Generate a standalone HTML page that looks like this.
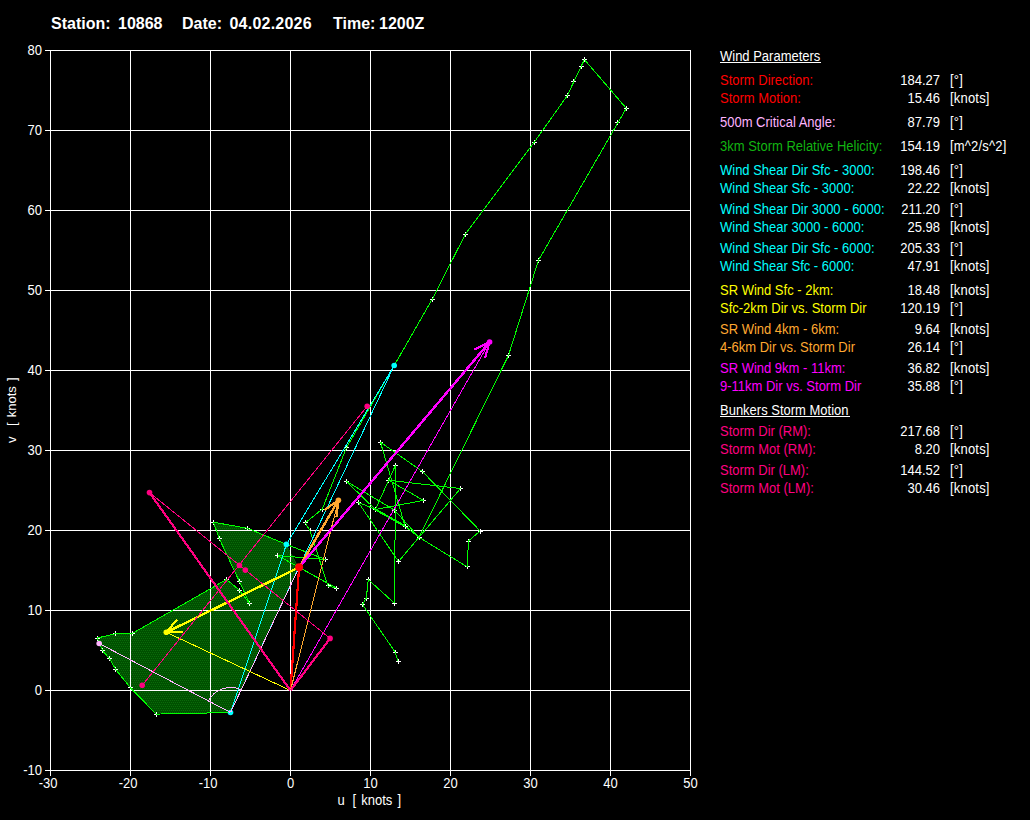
<!DOCTYPE html>
<html><head><meta charset="utf-8"><style>
html,body{margin:0;padding:0;background:#000;width:1030px;height:820px;overflow:hidden}
body{position:relative}
</style></head><body>
<svg width="1030" height="820" viewBox="0 0 1030 820" style="position:absolute;left:0;top:0">
<defs><pattern id="hp" width="2" height="4" patternUnits="userSpaceOnUse"><rect width="2" height="4" fill="#005000"/><rect x="0" y="0" width="1" height="1" fill="#0a6a0a"/><rect x="1" y="2" width="1" height="1" fill="#0a6a0a"/></pattern></defs>
<polygon points="230.5,712.5 156.2,714.1 130.5,687.8 115.8,669.7 109.4,658.5 102.6,650.7 97.3,638.0 115.2,633.8 132.8,633.2 226.5,579.5 239.4,590.2 249.6,603.4 239.4,581.5 219.3,538.7 213.4,522.2 247.6,528.3 286.4,544.4 299.1,567.3" fill="url(#hp)" fill-rule="evenodd" stroke="none" shape-rendering="crispEdges"/>
<path d="M50.5 50V775.5 M130.5 50V775.5 M210.5 50V775.5 M290.5 50V775.5 M370.5 50V775.5 M450.5 50V775.5 M530.5 50V775.5 M610.5 50V775.5 M690.5 50V775.5 M45 50.5H691 M45 130.5H691 M45 210.5H691 M45 290.5H691 M45 370.5H691 M45 450.5H691 M45 530.5H691 M45 610.5H691 M45 690.5H691 M45 770.5H691" stroke="#fff" stroke-width="1" fill="none" shape-rendering="crispEdges"/>
<path d="M154.0 714.5h5M156.5 712.0v5 M128.0 687.5h5M130.5 685.0v5 M113.0 669.5h5M115.5 667.0v5 M107.0 658.5h5M109.5 656.0v5 M100.0 650.5h5M102.5 648.0v5 M95.0 638.5h5M97.5 636.0v5 M113.0 633.5h5M115.5 631.0v5 M130.0 633.5h5M132.5 631.0v5 M224.0 579.5h5M226.5 577.0v5 M237.0 590.5h5M239.5 588.0v5 M247.0 603.5h5M249.5 601.0v5 M237.0 581.5h5M239.5 579.0v5 M217.0 538.5h5M219.5 536.0v5 M211.0 522.5h5M213.5 520.0v5 M245.0 528.5h5M247.5 526.0v5 M323.0 559.5h5M325.5 557.0v5 M275.0 555.5h5M277.5 553.0v5 M334.0 588.5h5M336.5 586.0v5 M326.0 585.5h5M328.5 583.0v5 M308.0 530.5h5M310.5 528.0v5 M303.0 522.5h5M305.5 520.0v5 M320.0 509.5h5M322.5 507.0v5 M344.0 447.5h5M346.5 445.0v5 M430.0 299.5h5M432.5 297.0v5 M463.0 234.5h5M465.5 232.0v5 M532.0 142.5h5M534.5 140.0v5 M565.0 95.5h5M567.5 93.0v5 M571.0 81.5h5M573.5 79.0v5 M579.0 66.5h5M581.5 64.0v5 M582.0 59.5h5M584.5 57.0v5 M624.0 108.5h5M626.5 106.0v5 M615.0 122.5h5M617.5 120.0v5 M536.0 260.5h5M538.5 258.0v5 M506.0 355.5h5M508.5 353.0v5 M417.0 537.5h5M419.5 535.0v5 M392.0 510.5h5M394.5 508.0v5 M403.0 526.5h5M405.5 524.0v5 M465.0 566.5h5M467.5 564.0v5 M396.0 561.5h5M398.5 559.0v5 M458.0 488.5h5M460.5 486.0v5 M466.0 541.5h5M468.5 539.0v5 M478.0 531.5h5M480.5 529.0v5 M420.0 471.5h5M422.5 469.0v5 M378.0 442.5h5M380.5 440.0v5 M356.0 502.5h5M358.5 500.0v5 M344.0 481.5h5M346.5 479.0v5 M373.0 509.5h5M375.5 507.0v5 M386.0 480.5h5M388.5 478.0v5 M421.0 500.5h5M423.5 498.0v5 M393.0 465.5h5M395.5 463.0v5 M392.0 603.5h5M394.5 601.0v5 M366.0 579.5h5M368.5 577.0v5 M364.0 598.5h5M366.5 596.0v5 M360.0 604.5h5M362.5 602.0v5 M393.0 652.5h5M395.5 650.0v5 M396.0 661.5h5M398.5 659.0v5" stroke="#fff" stroke-width="1" fill="none" shape-rendering="crispEdges"/>
<polyline points="230.5,712.5 156.2,714.1 130.5,687.8 115.8,669.7 109.4,658.5 102.6,650.7 97.3,638.0 115.2,633.8 132.8,633.2 226.5,579.5 239.4,590.2 249.6,603.4 239.4,581.5 219.3,538.7 213.4,522.2 247.6,528.3 286.4,544.4 286.4,544.4 325.6,559.5 277.8,555.6 336.8,588.3 328.0,585.9 310.0,530.7 305.1,522.9 322.2,509.2 346.4,447.8 394.2,365.5 432.2,299.3 465.4,234.1 534.1,142.4 567.3,95.6 573.9,81.5 581.2,66.3 584.4,59.5 626.3,108.3 617.8,122.9 538.5,260.2 508.5,355.4 419.0,537.3" fill="none" stroke="#00FF00" stroke-width="1" shape-rendering="crispEdges"/>
<line x1="394.9" y1="510.5" x2="419.0" y2="537.3" stroke="#00FF00" stroke-width="1" shape-rendering="crispEdges"/>
<line x1="405.1" y1="526.2" x2="419.0" y2="537.3" stroke="#00FF00" stroke-width="1" shape-rendering="crispEdges"/>
<line x1="419.0" y1="537.3" x2="467.3" y2="566.9" stroke="#00FF00" stroke-width="1" shape-rendering="crispEdges"/>
<line x1="398.5" y1="561.5" x2="419.0" y2="537.3" stroke="#00FF00" stroke-width="1" shape-rendering="crispEdges"/>
<line x1="419.0" y1="537.3" x2="460.5" y2="488.5" stroke="#00FF00" stroke-width="1" shape-rendering="crispEdges"/>
<line x1="467.3" y1="566.9" x2="468.4" y2="541.0" stroke="#00FF00" stroke-width="1" shape-rendering="crispEdges"/>
<line x1="468.4" y1="541.0" x2="480.2" y2="531.0" stroke="#00FF00" stroke-width="1" shape-rendering="crispEdges"/>
<line x1="480.2" y1="531.0" x2="422.4" y2="471.5" stroke="#00FF00" stroke-width="1" shape-rendering="crispEdges"/>
<line x1="422.4" y1="471.5" x2="380.5" y2="442.3" stroke="#00FF00" stroke-width="1" shape-rendering="crispEdges"/>
<line x1="380.5" y1="442.3" x2="405.1" y2="526.2" stroke="#00FF00" stroke-width="1" shape-rendering="crispEdges"/>
<line x1="358.3" y1="502.3" x2="375.4" y2="509.5" stroke="#00FF00" stroke-width="1" shape-rendering="crispEdges"/>
<line x1="375.4" y1="509.5" x2="405.1" y2="526.2" stroke="#00FF00" stroke-width="2" shape-rendering="crispEdges"/>
<line x1="358.3" y1="502.3" x2="398.5" y2="561.5" stroke="#00FF00" stroke-width="1" shape-rendering="crispEdges"/>
<line x1="346.4" y1="481.4" x2="375.4" y2="509.5" stroke="#00FF00" stroke-width="1" shape-rendering="crispEdges"/>
<line x1="346.4" y1="481.4" x2="394.9" y2="510.5" stroke="#00FF00" stroke-width="1" shape-rendering="crispEdges"/>
<line x1="375.4" y1="509.5" x2="388.7" y2="480.3" stroke="#00FF00" stroke-width="1" shape-rendering="crispEdges"/>
<line x1="375.4" y1="509.5" x2="423.5" y2="500.4" stroke="#00FF00" stroke-width="1" shape-rendering="crispEdges"/>
<line x1="388.7" y1="480.3" x2="423.5" y2="500.4" stroke="#00FF00" stroke-width="1" shape-rendering="crispEdges"/>
<line x1="388.7" y1="480.3" x2="460.5" y2="488.5" stroke="#00FF00" stroke-width="1" shape-rendering="crispEdges"/>
<line x1="388.7" y1="480.3" x2="395.5" y2="465.3" stroke="#00FF00" stroke-width="1" shape-rendering="crispEdges"/>
<line x1="395.5" y1="465.3" x2="394.6" y2="603.4" stroke="#00FF00" stroke-width="1" shape-rendering="crispEdges"/>
<polyline points="394.6,603.4 368.3,579.6 366.3,598.0 362.4,604.4 395.2,652.2 398.1,661.4" fill="none" stroke="#00FF00" stroke-width="1" shape-rendering="crispEdges"/>
<line x1="230.5" y1="712.5" x2="286.4" y2="544.4" stroke="#00FFFF" stroke-width="1" shape-rendering="crispEdges"/>
<line x1="286.4" y1="544.4" x2="394.2" y2="365.5" stroke="#00FFFF" stroke-width="1" shape-rendering="crispEdges"/>
<line x1="230.5" y1="712.5" x2="394.2" y2="365.5" stroke="#00FFFF" stroke-width="1" shape-rendering="crispEdges"/>
<circle cx="230.5" cy="712.5" r="2.8" fill="#00FFFF"/>
<circle cx="286.4" cy="544.4" r="2.8" fill="#00FFFF"/>
<circle cx="394.2" cy="365.5" r="2.8" fill="#00FFFF"/>
<line x1="99.2" y1="643.5" x2="230.5" y2="712.5" stroke="#FFB4FF" stroke-width="1" shape-rendering="crispEdges"/>
<line x1="230.5" y1="712.5" x2="299.1" y2="567.3" stroke="#FFB4FF" stroke-width="1" shape-rendering="crispEdges"/>
<path d="M208.4 700.9 A25 25 0 0 1 241.2 689.9" stroke="#FFB4FF" fill="none" shape-rendering="crispEdges"/>
<circle cx="99.2" cy="643.5" r="2.8" fill="#FFB4FF"/>
<line x1="290.5" y1="690.5" x2="299.1" y2="567.3" stroke="#FF0000" stroke-width="2.2" shape-rendering="crispEdges"/>
<line x1="290.5" y1="690.5" x2="166.3" y2="632.3" stroke="#FFFF00" stroke-width="1" shape-rendering="crispEdges"/>
<line x1="290.5" y1="690.5" x2="338.4" y2="500.2" stroke="#FFA830" stroke-width="1" shape-rendering="crispEdges"/>
<line x1="290.5" y1="690.5" x2="489.6" y2="342.0" stroke="#FF00FF" stroke-width="1" shape-rendering="crispEdges"/>
<line x1="299.1" y1="567.3" x2="166.3" y2="632.3" stroke="#FFFF00" stroke-width="2.4" shape-rendering="crispEdges"/><line x1="166.3" y1="632.3" x2="183.3" y2="631.7" stroke="#FFFF00" stroke-width="2.2" shape-rendering="crispEdges"/><line x1="166.3" y1="632.3" x2="177.2" y2="619.3" stroke="#FFFF00" stroke-width="2.2" shape-rendering="crispEdges"/><circle cx="166.3" cy="632.3" r="2.8" fill="#FFFF00"/>
<line x1="299.1" y1="567.3" x2="338.4" y2="500.2" stroke="#FFA830" stroke-width="2.4" shape-rendering="crispEdges"/><line x1="338.4" y1="500.2" x2="324.6" y2="510.1" stroke="#FFA830" stroke-width="2.2" shape-rendering="crispEdges"/><line x1="338.4" y1="500.2" x2="336.5" y2="517.1" stroke="#FFA830" stroke-width="2.2" shape-rendering="crispEdges"/><circle cx="338.4" cy="500.2" r="2.8" fill="#FFA830"/>
<line x1="299.1" y1="567.3" x2="489.6" y2="342.0" stroke="#FF00FF" stroke-width="2.4" shape-rendering="crispEdges"/><line x1="489.6" y1="342.0" x2="474.3" y2="349.4" stroke="#FF00FF" stroke-width="2.2" shape-rendering="crispEdges"/><line x1="489.6" y1="342.0" x2="484.9" y2="358.3" stroke="#FF00FF" stroke-width="2.2" shape-rendering="crispEdges"/><circle cx="489.6" cy="342.0" r="2.8" fill="#FF00FF"/>
<line x1="149.5" y1="492.6" x2="290.5" y2="690.5" stroke="#FF0080" stroke-width="2.2" shape-rendering="crispEdges"/>
<line x1="290.5" y1="690.5" x2="330.1" y2="638.4" stroke="#FF0080" stroke-width="2.2" shape-rendering="crispEdges"/>
<line x1="142.2" y1="685.3" x2="367.2" y2="406.2" stroke="#FF0080" stroke-width="1" shape-rendering="crispEdges"/>
<line x1="149.5" y1="492.6" x2="330.1" y2="638.4" stroke="#FF0080" stroke-width="1" shape-rendering="crispEdges"/>
<circle cx="149.5" cy="492.6" r="2.8" fill="#FF0080"/>
<circle cx="330.1" cy="638.4" r="2.8" fill="#FF0080"/>
<circle cx="142.2" cy="685.3" r="2.8" fill="#FF0080"/>
<circle cx="239.4" cy="565.3" r="2.8" fill="#FF0080"/>
<circle cx="367.2" cy="406.2" r="2.8" fill="#FF0080"/>
<circle cx="245.3" cy="570.1" r="2.8" fill="#FF0080"/>
<circle cx="299.1" cy="567.3" r="4" fill="#FF0000"/>
<text transform="translate(0,788) scale(1,1.07)" x="48.1" y="0" font-family="Liberation Sans" font-size="13" fill="#fff" text-anchor="middle">-30</text>
<text transform="translate(0,788) scale(1,1.07)" x="128.1" y="0" font-family="Liberation Sans" font-size="13" fill="#fff" text-anchor="middle">-20</text>
<text transform="translate(0,788) scale(1,1.07)" x="208.1" y="0" font-family="Liberation Sans" font-size="13" fill="#fff" text-anchor="middle">-10</text>
<text transform="translate(0,788) scale(1,1.07)" x="290.5" y="0" font-family="Liberation Sans" font-size="13" fill="#fff" text-anchor="middle">0</text>
<text transform="translate(0,788) scale(1,1.07)" x="370.5" y="0" font-family="Liberation Sans" font-size="13" fill="#fff" text-anchor="middle">10</text>
<text transform="translate(0,788) scale(1,1.07)" x="450.5" y="0" font-family="Liberation Sans" font-size="13" fill="#fff" text-anchor="middle">20</text>
<text transform="translate(0,788) scale(1,1.07)" x="530.5" y="0" font-family="Liberation Sans" font-size="13" fill="#fff" text-anchor="middle">30</text>
<text transform="translate(0,788) scale(1,1.07)" x="610.5" y="0" font-family="Liberation Sans" font-size="13" fill="#fff" text-anchor="middle">40</text>
<text transform="translate(0,788) scale(1,1.07)" x="690.5" y="0" font-family="Liberation Sans" font-size="13" fill="#fff" text-anchor="middle">50</text>
<text transform="translate(0,55) scale(1,1.07)" x="42" y="0" font-family="Liberation Sans" font-size="13" fill="#fff" text-anchor="end">80</text>
<text transform="translate(0,135) scale(1,1.07)" x="42" y="0" font-family="Liberation Sans" font-size="13" fill="#fff" text-anchor="end">70</text>
<text transform="translate(0,215) scale(1,1.07)" x="42" y="0" font-family="Liberation Sans" font-size="13" fill="#fff" text-anchor="end">60</text>
<text transform="translate(0,295) scale(1,1.07)" x="42" y="0" font-family="Liberation Sans" font-size="13" fill="#fff" text-anchor="end">50</text>
<text transform="translate(0,375) scale(1,1.07)" x="42" y="0" font-family="Liberation Sans" font-size="13" fill="#fff" text-anchor="end">40</text>
<text transform="translate(0,455) scale(1,1.07)" x="42" y="0" font-family="Liberation Sans" font-size="13" fill="#fff" text-anchor="end">30</text>
<text transform="translate(0,535) scale(1,1.07)" x="42" y="0" font-family="Liberation Sans" font-size="13" fill="#fff" text-anchor="end">20</text>
<text transform="translate(0,615) scale(1,1.07)" x="42" y="0" font-family="Liberation Sans" font-size="13" fill="#fff" text-anchor="end">10</text>
<text transform="translate(0,695) scale(1,1.07)" x="42" y="0" font-family="Liberation Sans" font-size="13" fill="#fff" text-anchor="end">0</text>
<text transform="translate(0,775) scale(1,1.07)" x="42" y="0" font-family="Liberation Sans" font-size="13" fill="#fff" text-anchor="end">-10</text>
<g transform="translate(0,805) scale(1,1.07)"><text x="337.6" y="0" font-family="Liberation Sans" font-size="13" fill="#fff">u</text>
<text x="352.6" y="0" font-family="Liberation Sans" font-size="13" fill="#fff" word-spacing="1.5" xml:space="preserve">[ knots ]</text></g>
<text transform="translate(16,410.2) rotate(-90)" font-family="Liberation Sans" font-size="13" fill="#fff" text-anchor="middle" word-spacing="1.6" xml:space="preserve">v  [ knots ]</text>
<text x="51" y="29" font-family="Liberation Sans" font-weight="bold" font-size="16" fill="#fff"  letter-spacing="0">Station:</text>
<text x="118" y="29" font-family="Liberation Sans" font-weight="bold" font-size="16" fill="#fff"  letter-spacing="0">10868</text>
<text x="182" y="29" font-family="Liberation Sans" font-weight="bold" font-size="16" fill="#fff"  letter-spacing="0">Date:</text>
<text x="229.5" y="29" font-family="Liberation Sans" font-weight="bold" font-size="16" fill="#fff"  letter-spacing="0.22">04.02.2026</text>
<text x="333" y="29" font-family="Liberation Sans" font-weight="bold" font-size="16" fill="#fff"  letter-spacing="0">Time:</text>
<text x="379" y="29" font-family="Liberation Sans" font-weight="bold" font-size="16" fill="#fff"  letter-spacing="0">1200Z</text>
<rect x="720" y="62" width="101" height="1" fill="#fff"/>
<g transform="translate(0,61) scale(1,1.07)">
<text x="720" y="0" font-family="Liberation Sans" font-size="13" fill="#fff">Wind Parameters</text>
</g>
<g transform="translate(0,85) scale(1,1.07)">
<text x="720" y="0" font-family="Liberation Sans" font-size="13" fill="#FF0000">Storm Direction:</text>
<text x="940" y="0" font-family="Liberation Sans" font-size="13" fill="#fff" text-anchor="end">184.27</text>
<text x="950" y="0" font-family="Liberation Sans" font-size="13" fill="#fff" letter-spacing="0.2">[°]</text>
</g>
<g transform="translate(0,103) scale(1,1.07)">
<text x="720" y="0" font-family="Liberation Sans" font-size="13" fill="#FF0000">Storm Motion:</text>
<text x="940" y="0" font-family="Liberation Sans" font-size="13" fill="#fff" text-anchor="end">15.46</text>
<text x="950" y="0" font-family="Liberation Sans" font-size="13" fill="#fff" letter-spacing="0.2">[knots]</text>
</g>
<g transform="translate(0,127) scale(1,1.07)">
<text x="720" y="0" font-family="Liberation Sans" font-size="13" fill="#FFB4FF">500m Critical Angle:</text>
<text x="940" y="0" font-family="Liberation Sans" font-size="13" fill="#fff" text-anchor="end">87.79</text>
<text x="950" y="0" font-family="Liberation Sans" font-size="13" fill="#fff" letter-spacing="0.2">[°]</text>
</g>
<g transform="translate(0,151) scale(1,1.07)">
<text x="720" y="0" font-family="Liberation Sans" font-size="13" fill="#12B412">3km Storm Relative Helicity:</text>
<text x="940" y="0" font-family="Liberation Sans" font-size="13" fill="#fff" text-anchor="end">154.19</text>
<text x="950" y="0" font-family="Liberation Sans" font-size="13" fill="#fff" letter-spacing="0.2">[m^2/s^2]</text>
</g>
<g transform="translate(0,175) scale(1,1.07)">
<text x="720" y="0" font-family="Liberation Sans" font-size="13" fill="#00FFFF">Wind Shear Dir Sfc - 3000:</text>
<text x="940" y="0" font-family="Liberation Sans" font-size="13" fill="#fff" text-anchor="end">198.46</text>
<text x="950" y="0" font-family="Liberation Sans" font-size="13" fill="#fff" letter-spacing="0.2">[°]</text>
</g>
<g transform="translate(0,193) scale(1,1.07)">
<text x="720" y="0" font-family="Liberation Sans" font-size="13" fill="#00FFFF">Wind Shear Sfc - 3000:</text>
<text x="940" y="0" font-family="Liberation Sans" font-size="13" fill="#fff" text-anchor="end">22.22</text>
<text x="950" y="0" font-family="Liberation Sans" font-size="13" fill="#fff" letter-spacing="0.2">[knots]</text>
</g>
<g transform="translate(0,214) scale(1,1.07)">
<text x="720" y="0" font-family="Liberation Sans" font-size="13" fill="#00FFFF">Wind Shear Dir 3000 - 6000:</text>
<text x="940" y="0" font-family="Liberation Sans" font-size="13" fill="#fff" text-anchor="end">211.20</text>
<text x="950" y="0" font-family="Liberation Sans" font-size="13" fill="#fff" letter-spacing="0.2">[°]</text>
</g>
<g transform="translate(0,232) scale(1,1.07)">
<text x="720" y="0" font-family="Liberation Sans" font-size="13" fill="#00FFFF">Wind Shear 3000 - 6000:</text>
<text x="940" y="0" font-family="Liberation Sans" font-size="13" fill="#fff" text-anchor="end">25.98</text>
<text x="950" y="0" font-family="Liberation Sans" font-size="13" fill="#fff" letter-spacing="0.2">[knots]</text>
</g>
<g transform="translate(0,253) scale(1,1.07)">
<text x="720" y="0" font-family="Liberation Sans" font-size="13" fill="#00FFFF">Wind Shear Dir Sfc - 6000:</text>
<text x="940" y="0" font-family="Liberation Sans" font-size="13" fill="#fff" text-anchor="end">205.33</text>
<text x="950" y="0" font-family="Liberation Sans" font-size="13" fill="#fff" letter-spacing="0.2">[°]</text>
</g>
<g transform="translate(0,271) scale(1,1.07)">
<text x="720" y="0" font-family="Liberation Sans" font-size="13" fill="#00FFFF">Wind Shear Sfc - 6000:</text>
<text x="940" y="0" font-family="Liberation Sans" font-size="13" fill="#fff" text-anchor="end">47.91</text>
<text x="950" y="0" font-family="Liberation Sans" font-size="13" fill="#fff" letter-spacing="0.2">[knots]</text>
</g>
<g transform="translate(0,295) scale(1,1.07)">
<text x="720" y="0" font-family="Liberation Sans" font-size="13" fill="#FFFF00">SR Wind Sfc - 2km:</text>
<text x="940" y="0" font-family="Liberation Sans" font-size="13" fill="#fff" text-anchor="end">18.48</text>
<text x="950" y="0" font-family="Liberation Sans" font-size="13" fill="#fff" letter-spacing="0.2">[knots]</text>
</g>
<g transform="translate(0,313) scale(1,1.07)">
<text x="720" y="0" font-family="Liberation Sans" font-size="13" fill="#FFFF00">Sfc-2km Dir vs. Storm Dir</text>
<text x="940" y="0" font-family="Liberation Sans" font-size="13" fill="#fff" text-anchor="end">120.19</text>
<text x="950" y="0" font-family="Liberation Sans" font-size="13" fill="#fff" letter-spacing="0.2">[°]</text>
</g>
<g transform="translate(0,334) scale(1,1.07)">
<text x="720" y="0" font-family="Liberation Sans" font-size="13" fill="#FFA830">SR Wind 4km - 6km:</text>
<text x="940" y="0" font-family="Liberation Sans" font-size="13" fill="#fff" text-anchor="end">9.64</text>
<text x="950" y="0" font-family="Liberation Sans" font-size="13" fill="#fff" letter-spacing="0.2">[knots]</text>
</g>
<g transform="translate(0,352) scale(1,1.07)">
<text x="720" y="0" font-family="Liberation Sans" font-size="13" fill="#FFA830">4-6km Dir vs. Storm Dir</text>
<text x="940" y="0" font-family="Liberation Sans" font-size="13" fill="#fff" text-anchor="end">26.14</text>
<text x="950" y="0" font-family="Liberation Sans" font-size="13" fill="#fff" letter-spacing="0.2">[°]</text>
</g>
<g transform="translate(0,373) scale(1,1.07)">
<text x="720" y="0" font-family="Liberation Sans" font-size="13" fill="#FF00FF">SR Wind 9km - 11km:</text>
<text x="940" y="0" font-family="Liberation Sans" font-size="13" fill="#fff" text-anchor="end">36.82</text>
<text x="950" y="0" font-family="Liberation Sans" font-size="13" fill="#fff" letter-spacing="0.2">[knots]</text>
</g>
<g transform="translate(0,391) scale(1,1.07)">
<text x="720" y="0" font-family="Liberation Sans" font-size="13" fill="#FF00FF">9-11km Dir vs. Storm Dir</text>
<text x="940" y="0" font-family="Liberation Sans" font-size="13" fill="#fff" text-anchor="end">35.88</text>
<text x="950" y="0" font-family="Liberation Sans" font-size="13" fill="#fff" letter-spacing="0.2">[°]</text>
</g>
<rect x="720" y="416" width="130" height="1" fill="#fff"/>
<g transform="translate(0,415) scale(1,1.07)">
<text x="720" y="0" font-family="Liberation Sans" font-size="13" fill="#fff">Bunkers Storm Motion</text>
</g>
<g transform="translate(0,436) scale(1,1.07)">
<text x="720" y="0" font-family="Liberation Sans" font-size="13" fill="#FF0080">Storm Dir (RM):</text>
<text x="940" y="0" font-family="Liberation Sans" font-size="13" fill="#fff" text-anchor="end">217.68</text>
<text x="950" y="0" font-family="Liberation Sans" font-size="13" fill="#fff" letter-spacing="0.2">[°]</text>
</g>
<g transform="translate(0,454) scale(1,1.07)">
<text x="720" y="0" font-family="Liberation Sans" font-size="13" fill="#FF0080">Storm Mot (RM):</text>
<text x="940" y="0" font-family="Liberation Sans" font-size="13" fill="#fff" text-anchor="end">8.20</text>
<text x="950" y="0" font-family="Liberation Sans" font-size="13" fill="#fff" letter-spacing="0.2">[knots]</text>
</g>
<g transform="translate(0,475) scale(1,1.07)">
<text x="720" y="0" font-family="Liberation Sans" font-size="13" fill="#FF0080">Storm Dir (LM):</text>
<text x="940" y="0" font-family="Liberation Sans" font-size="13" fill="#fff" text-anchor="end">144.52</text>
<text x="950" y="0" font-family="Liberation Sans" font-size="13" fill="#fff" letter-spacing="0.2">[°]</text>
</g>
<g transform="translate(0,493) scale(1,1.07)">
<text x="720" y="0" font-family="Liberation Sans" font-size="13" fill="#FF0080">Storm Mot (LM):</text>
<text x="940" y="0" font-family="Liberation Sans" font-size="13" fill="#fff" text-anchor="end">30.46</text>
<text x="950" y="0" font-family="Liberation Sans" font-size="13" fill="#fff" letter-spacing="0.2">[knots]</text>
</g>
</svg>
</body></html>
